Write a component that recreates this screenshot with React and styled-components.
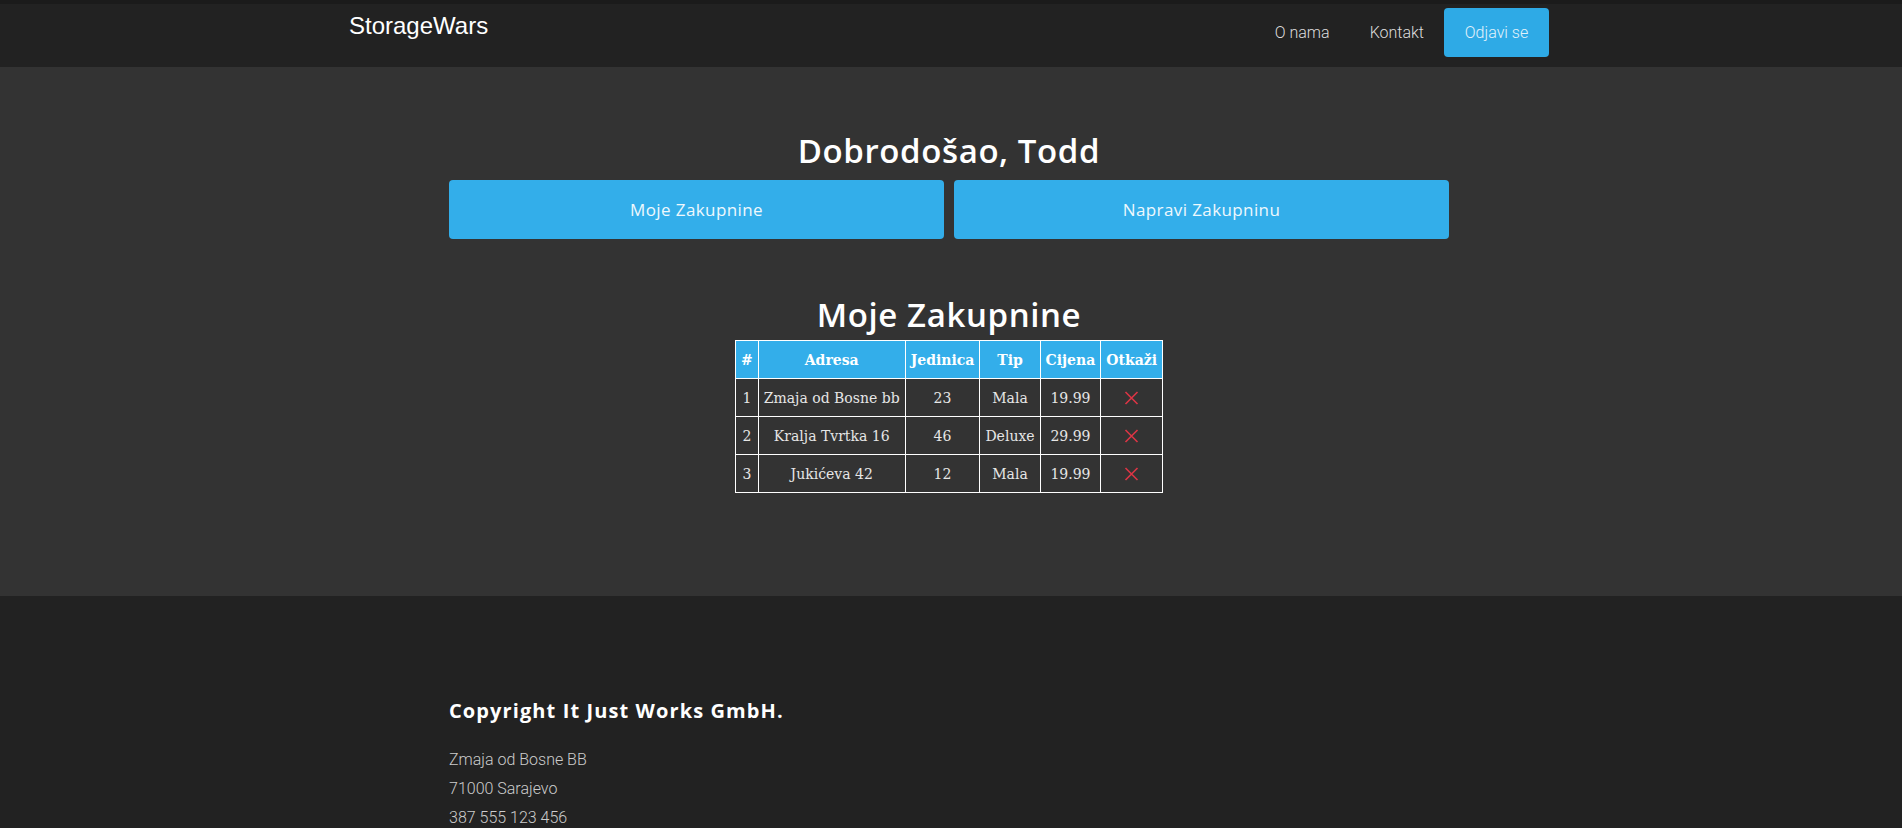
import React from "react";
import styled, { createGlobalStyle } from "styled-components";

const GlobalStyle = createGlobalStyle`
  * { box-sizing: border-box; }
  body {
    margin: 0;
    background: #333;
    font-family: Roboto, "Liberation Sans", sans-serif;
    font-weight: 300;
  }
`;

const rentals = [
  { id: 1, address: "Zmaja od Bosne bb", unit: 23, type: "Mala", price: "19.99" },
  { id: 2, address: "Kralja Tvrtka 16", unit: 46, type: "Deluxe", price: "29.99" },
  { id: 3, address: "Jukićeva 42", unit: 12, type: "Mala", price: "19.99" },
];

const CrossIcon = () => (
  <svg width="15" height="14" viewBox="0 0 15 14">
    <path d="M1.5 1 L13.5 13 M13.5 1 L1.5 13" stroke="#dc3545" strokeWidth="1.6" fill="none" />
  </svg>
);

const App = () => {
  return (
    <>
      <GlobalStyle />
      <NAVBAR>
        <NavInner>
          <Brand>StorageWars</Brand>
          <NavLinks>
            <NavLink>O nama</NavLink>
            <NavLink>Kontakt</NavLink>
            <LogoutButton>Odjavi se</LogoutButton>
          </NavLinks>
        </NavInner>
      </NAVBAR>

      <MAIN>
        <Content>
          <Title>Dobrodošao, Todd</Title>
          <ActionRow>
            <ActionButton>Moje Zakupnine</ActionButton>
            <ActionButton>Napravi Zakupninu</ActionButton>
          </ActionRow>

          <SectionTitle>Moje Zakupnine</SectionTitle>
          <RentalTable>
            <thead>
              <tr>
                <th>#</th>
                <th>Adresa</th>
                <th>Jedinica</th>
                <th>Tip</th>
                <th>Cijena</th>
                <th>Otkaži</th>
              </tr>
            </thead>
            <tbody>
              {rentals.map((r) => (
                <tr key={r.id}>
                  <td>{r.id}</td>
                  <td>{r.address}</td>
                  <td>{r.unit}</td>
                  <td>{r.type}</td>
                  <td>{r.price}</td>
                  <td>
                    <CrossIcon />
                  </td>
                </tr>
              ))}
            </tbody>
          </RentalTable>
        </Content>
      </MAIN>

      <FOOTER>
        <Content>
          <FooterTitle>Copyright It Just Works GmbH.</FooterTitle>
          <FooterLine>Zmaja od Bosne BB</FooterLine>
          <FooterLine>71000 Sarajevo</FooterLine>
          <FooterLine>387 555 123 456</FooterLine>
        </Content>
      </FOOTER>
    </>
  );
};

export default App;

const heading = `"Open Sans", "Noto Sans", sans-serif`;

let NAVBAR = styled.header`
  background: #222;
  border-top: 4px solid #1b1b1b;
  height: 67px;
`;

let NavInner = styled.div`
  max-width: 1200px;
  margin: 0 auto;
  position: relative;
  left: -2px;
  display: flex;
  justify-content: space-between;
  align-items: flex-start;
`;

let Brand = styled.div`
  font-family: "Liberation Sans", Arial, sans-serif;
  font-weight: 400;
  font-size: 24px;
  color: #fff;
  padding-top: 8px;
`;

let NavLinks = styled.nav`
  display: flex;
  align-items: center;
  padding-top: 4px;
`;

let NavLink = styled.a`
  font-size: 16px;
  color: #ddd;
  padding: 0 20px;
  line-height: 49px;
`;

let LogoutButton = styled.button`
  font-family: Roboto, sans-serif;
  font-weight: 300;
  font-size: 16px;
  color: #e2f2fb;
  background: #2eaae6;
  border: 0;
  border-radius: 4px;
  height: 49px;
  width: 105px;
`;

let MAIN = styled.main`
  background: #333;
  padding: 64px 0 103px;
`;

let Content = styled.div`
  width: 1000px;
  margin: 0 auto;
  position: relative;
  left: -2px;
`;

let Title = styled.h1`
  font-family: ${heading};
  font-weight: 600;
  font-size: 33px;
  letter-spacing: 0.6px;
  line-height: 40px;
  color: #fff;
  text-align: center;
  margin: 0 0 9px;
`;

let ActionRow = styled.div`
  display: grid;
  grid-template-columns: 1fr 1fr;
  gap: 10px;
`;

let ActionButton = styled.button`
  height: 59px;
  background: #33aeea;
  border: 0;
  border-radius: 4px;
  color: #eef8fd;
  font-family: ${heading};
  font-weight: 400;
  font-size: 17px;
  letter-spacing: 0.4px;
`;

let SectionTitle = styled.h2`
  font-family: ${heading};
  font-weight: 600;
  font-size: 33px;
  letter-spacing: 0.6px;
  line-height: 40px;
  color: #fff;
  text-align: center;
  margin: 56px 0 5px;
`;

let RentalTable = styled.table`
  margin: 0 auto;
  border-collapse: collapse;
  font-family: "DejaVu Serif", serif;
  font-size: 14px;
  color: #e6e6e6;
  th, td {
    border: 1px solid #fff;
    padding: 0 5px;
    height: 38px;
    text-align: center;
  }
  th {
    background: #33aeea;
    color: #fff;
    font-weight: 700;
  }
  svg {
    display: block;
    margin: 0 auto;
  }
`;

let FOOTER = styled.footer`
  background: #222;
  padding: 101px 0 40px;
`;

let FooterTitle = styled.h3`
  font-family: ${heading};
  font-weight: 700;
  font-size: 20px;
  letter-spacing: 1.1px;
  color: #fff;
  margin: 0 0 21px;
`;

let FooterLine = styled.p`
  font-size: 16px;
  color: #ccc;
  margin: 0;
  line-height: 29px;
`;
